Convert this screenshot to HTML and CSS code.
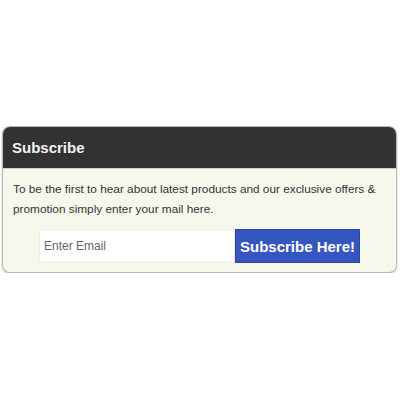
FILE: index.html
```html
<!DOCTYPE html>
<html lang="en">
<head>
    <meta charset="UTF-8">
    <title>Subscribe</title>
    <link rel="stylesheet" href="styles.css">
</head>
<body>
    <div class="subscribe-box">
        <h3 class="subscribe-title">Subscribe</h3>
        <div class="subscribe-body">
            <p>To be the first to hear about latest products and our exclusive offers &amp; promotion simply enter your mail here.</p>
            <form class="subscribe-form" onsubmit="return false">
                <input type="text" class="email-input" placeholder="Enter Email">
                <button class="subscribe-btn">Subscribe Here!</button>
            </form>
        </div>
    </div>
</body>
</html>
```

FILE: styles.css
```css
body {
    margin: 0;
    padding: 126px 3px 0 2px;
    background: #fff;
    font-family: 'Liberation Sans', Arial, sans-serif;
}

.subscribe-box {
    border: 1px solid #b9b9b0;
    border-radius: 8px;
    overflow: hidden;
    background: #f7f8ec;
    box-shadow: 0 1px 2px rgba(0,0,0,0.25);
}

.subscribe-title {
    margin: 0;
    height: 41px;
    line-height: 41px;
    padding: 0 9px;
    background: #323232;
    color: #f2f2f2;
    font-size: 15px;
    font-weight: bold;
    border-bottom: 1px solid #cfcfc4;
}

.subscribe-body {
    padding: 10px 10px 9px;
}

.subscribe-body p {
    margin: 0;
    font-size: 11.8px;
    line-height: 20px;
    color: #333;
}

.subscribe-form {
    display: flex;
    justify-content: center;
    margin-top: 10px;
}

.email-input {
    width: 196px;
    height: 34px;
    box-sizing: border-box;
    border: 1px solid #eceee4;
    background: #fff;
    padding: 0 4px;
    font-family: 'Liberation Sans', Arial, sans-serif;
    font-size: 12px;
    color: #555;
    outline: none;
}

.email-input::placeholder {
    color: #666;
}

.subscribe-btn {
    height: 34px;
    padding: 0 4px;
    border: 1px solid #2a47a8;
    background: #3456be;
    color: #fff;
    font-family: 'Liberation Sans', Arial, sans-serif;
    font-size: 15px;
    font-weight: bold;
    cursor: pointer;
}
```
